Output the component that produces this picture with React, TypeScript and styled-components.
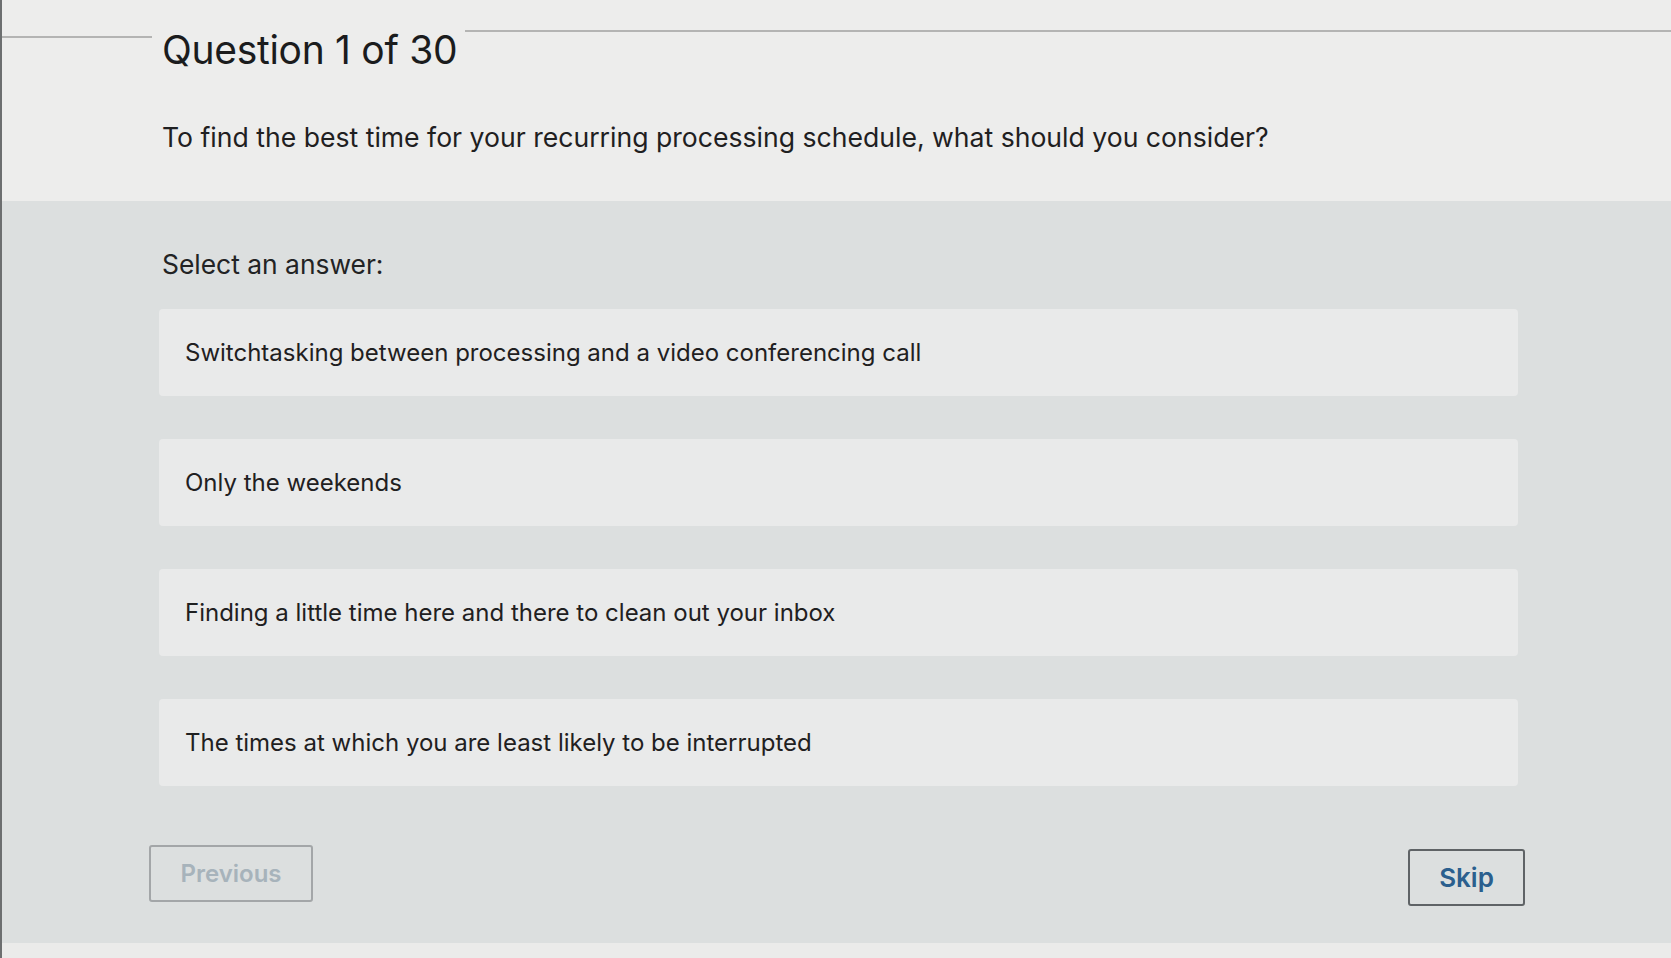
import React from "react";
import styled, { createGlobalStyle } from "styled-components";

const GlobalStyle = createGlobalStyle`
  html, body {
    margin: 0;
    padding: 0;
    background: #dcdfdf;
  }
  body {
    font-family: Inter, "Liberation Sans", Arial, sans-serif;
    color: #1d1e1f;
  }
  * { box-sizing: border-box; }
`;

const Page = styled.div`
  width: 1671px;
  height: 958px;
  display: flex;
  flex-direction: column;
  border-left: 2px solid #6d6f70;
  overflow: hidden;
`;

const Header = styled.header`
  height: 201px;
  background: #ededec;
  padding-top: 30px;
  display: flex;
  flex-direction: column;
`;

const TitleRow = styled.div`
  display: flex;
  align-items: flex-start;
`;

const Rule = styled.div<{ $grow?: boolean; $width?: number }>`
  height: 2px;
  margin-top: ${(p) => (p.$grow ? "0px" : "6px")};
  background: #b4b4b3;
  flex: ${(p) => (p.$grow ? "1 1 auto" : `0 0 ${p.$width ?? 0}px`)};
`;

const Title = styled.h1`
  margin: 0;
  padding: 0 8px 0 10px;
  font-family: Inter, "Liberation Sans", Arial, sans-serif;
  font-size: 39px;
  line-height: 40px;
  font-weight: 400;
  letter-spacing: -0.3px;
  color: #1b1c1d;
`;

const Question = styled.p`
  margin: 52px 0 0 160px;
  font-size: 26.6px;
  line-height: 30px;
  color: #1f2021;
`;

const Main = styled.main`
  flex: 1 1 auto;
  padding: 48px 153px 0 157px;
  display: flex;
  flex-direction: column;
`;

const Prompt = styled.div`
  font-size: 26.4px;
  line-height: 30px;
  padding-left: 3px;
  color: #222324;
`;

const Options = styled.div`
  margin-top: 30px;
  display: flex;
  flex-direction: column;
  gap: 43px;
`;

const Option = styled.button`
  all: unset;
  height: 87px;
  display: flex;
  align-items: center;
  padding-left: 26px;
  border-radius: 4px;
  background: #e9eaea;
  font-family: Inter, "Liberation Sans", Arial, sans-serif;
  font-size: 24px;
  color: #1f2021;
  cursor: pointer;
`;

const Actions = styled.div`
  margin: 59px -7px 0 -10px;
  display: flex;
  justify-content: space-between;
  align-items: flex-start;
`;

const NavButton = styled.button<{ $primary?: boolean }>`
  height: 57px;
  width: ${(p) => (p.$primary ? "117px" : "164px")};
  margin-top: ${(p) => (p.$primary ? "4px" : "0")};
  border-radius: 3px;
  background: transparent;
  border: 2px solid ${(p) => (p.$primary ? "#5f6366" : "#a3a6a8")};
  font-family: Inter, "Liberation Sans", Arial, sans-serif;
  font-weight: 600;
  font-size: ${(p) => (p.$primary ? "26px" : "24px")};
  color: ${(p) => (p.$primary ? "#2b5f8e" : "#a7b3bb")};
  cursor: ${(p) => (p.$primary ? "pointer" : "default")};
`;

const Footer = styled.div`
  height: 15px;
  background: #ebebea;
`;

const answers = [
  "Switchtasking between processing and a video conferencing call",
  "Only the weekends",
  "Finding a little time here and there to clean out your inbox",
  "The times at which you are least likely to be interrupted",
];

export default function App() {
  return (
    <>
      <GlobalStyle />
      <Page>
        <Header>
          <TitleRow>
            <Rule $width={150} />
            <Title>Question 1 of 30</Title>
            <Rule $grow />
          </TitleRow>
          <Question>
            To find the best time for your recurring processing schedule, what should you consider?
          </Question>
        </Header>
        <Main>
          <Prompt>Select an answer:</Prompt>
          <Options>
            {answers.map((a) => (
              <Option key={a}>{a}</Option>
            ))}
          </Options>
          <Actions>
            <NavButton disabled>Previous</NavButton>
            <NavButton $primary>Skip</NavButton>
          </Actions>
        </Main>
        <Footer />
      </Page>
    </>
  );
}
